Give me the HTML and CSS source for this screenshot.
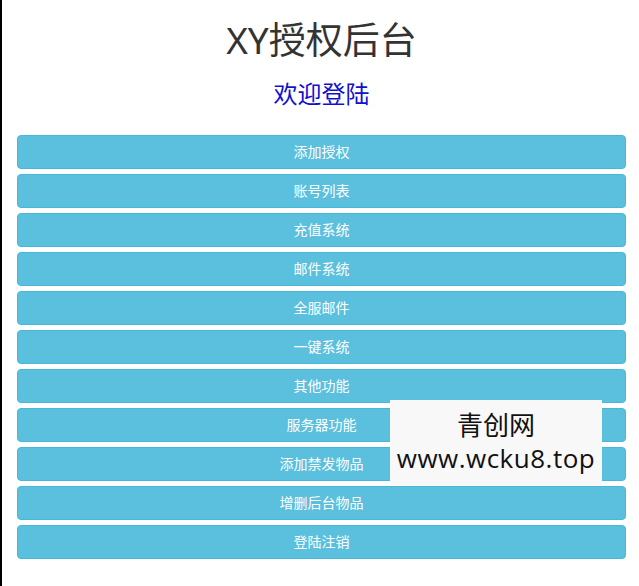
FILE: index.html
```html
<!DOCTYPE html>
<html lang="zh-CN">
<head>
<meta charset="utf-8">
<title>XY授权后台</title>
<link rel="stylesheet" href="styles.css">
</head>
<body>
<div class="page">
  <h1 class="title">XY授权后台</h1>
  <h3 class="welcome">欢迎登陆</h3>
  <div class="menu">
    <a class="btn">添加授权</a>
    <a class="btn">账号列表</a>
    <a class="btn">充值系统</a>
    <a class="btn">邮件系统</a>
    <a class="btn">全服邮件</a>
    <a class="btn">一键系统</a>
    <a class="btn">其他功能</a>
    <a class="btn">服务器功能</a>
    <a class="btn">添加禁发物品</a>
    <a class="btn">增删后台物品</a>
    <a class="btn">登陆注销</a>
  </div>
  <div class="watermark">
    <div class="wm-name">青创网</div>
    <div class="wm-url">www.wcku8.top</div>
  </div>
</div>
</body>
</html>
```
FILE: styles.css
```css
html, body {
  margin: 0;
  padding: 0;
  background: #fff;
}
body {
  border-left: 2px solid #000;
  min-height: 586px;
  box-sizing: border-box;
  font-family: "Open Sans", "Noto Sans CJK SC", sans-serif;
}
.page {
  position: relative;
  padding: 0 13px 0 15px;
}
.title {
  margin: 0;
  padding-top: 20px;
  font-size: 37px;
  line-height: 40px;
  font-weight: 400;
  color: #333;
  text-align: center;
  font-family: "Noto Sans", "Noto Sans CJK SC", sans-serif;
}
.welcome {
  margin: 20px 0 0;
  font-size: 24px;
  line-height: 26px;
  font-weight: 400;
  color: #1010d0;
  text-align: center;
  font-family: "Noto Sans CJK SC", sans-serif;
}
.menu {
  display: flex;
  flex-direction: column;
  gap: 5px;
  margin-top: 29px;
}
.btn {
  display: block;
  height: 34px;
  box-sizing: border-box;
  padding: 5px 12px 7px;
  font-size: 14px;
  line-height: 20px;
  color: #fff;
  text-align: center;
  background: #5bc0de;
  border: 1px solid #46b8da;
  border-radius: 4px;
  font-family: "Noto Sans CJK SC", sans-serif;
}
.watermark {
  position: absolute;
  left: 388px;
  top: 400px;
  width: 212px;
  height: 85px;
  background: #f8f8f8;
  color: #111;
  text-align: center;
  display: flex;
  flex-direction: column;
  justify-content: center;
  font-size: 26px;
  line-height: 35px;
}
.wm-name {
  font-family: "Noto Sans CJK SC", sans-serif;
  margin-top: -4px;
}
.wm-url {
  font-family: "Open Sans", sans-serif;
  letter-spacing: 0.5px;
  white-space: nowrap;
}
```
